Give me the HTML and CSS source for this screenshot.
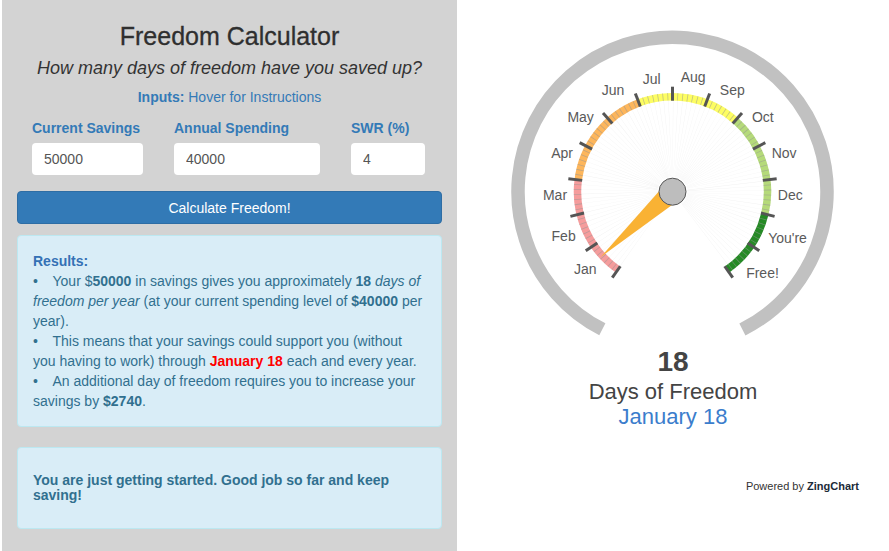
FILE: index.html
```html
<!DOCTYPE html>
<html lang="en">
<head>
<meta charset="utf-8">
<title>Freedom Calculator</title>
<link rel="stylesheet" href="styles.css">
</head>
<body>
<div class="page">
  <section class="panel">
    <h3 class="title">Freedom Calculator</h3>
    <p class="subtitle">How many days of freedom have you saved up?</p>
    <p class="hint"><b>Inputs:</b> Hover for Instructions</p>
    <div class="fields">
      <div class="field">
        <label class="field-label">Current Savings</label>
        <input class="field-input" type="text" value="50000">
      </div>
      <div class="field">
        <label class="field-label">Annual Spending</label>
        <input class="field-input" type="text" value="40000">
      </div>
      <div class="field">
        <label class="field-label">SWR (%)</label>
        <input class="field-input" type="text" value="4">
      </div>
    </div>
    <button class="calc-btn" type="button">Calculate Freedom!</button>
    <div class="alert results">
      <div class="results-title">Results:</div>
      <div><span class="bullet">•</span>Your $<b>50000</b> in savings gives you approximately <b>18</b> <i>days of</i><br><i>freedom per year</i> (at your current spending level of <b>$40000</b> per<br>year).</div>
      <div><span class="bullet">•</span>This means that your savings could support you (without<br>you having to work) through <span class="red">January 18</span> each and every year.</div>
      <div><span class="bullet">•</span>An additional day of freedom requires you to increase your<br>savings by <b>$2740</b>.</div>
    </div>
    <div class="alert note">
      <h5 class="note-text">You are just getting started. Good job so far and keep<br>saving!</h5>
    </div>
  </section>
  <section class="chart">
    <svg class="gauge" width="432" height="347" viewBox="0 0 432 347">
      <g transform="translate(215.5 191.7)">
        <circle r="154.5" fill="none" stroke="#c1c1c1" stroke-width="13.5" stroke-dasharray="825.1 970.8" transform="rotate(-243)"/>
        <path d="M -30.40 43.42 A 53 53 0 1 1 30.40 43.42" fill="none" stroke="#f1f1f1" stroke-width="76" stroke-dasharray="0.3 2.437"/>
        <g fill="none" stroke-width="7.5">
          <circle r="95" stroke="#f59c9c" stroke-dasharray="103.04 596.9" transform="rotate(-235)"/>
          <circle r="95" stroke="#fdb65c" stroke-dasharray="103.04 596.9" transform="rotate(-172.857)"/>
          <circle r="95" stroke="#fdfd62" stroke-dasharray="103.04 596.9" transform="rotate(-110.714)"/>
          <circle r="95" stroke="#b5da7a" stroke-dasharray="103.04 596.9" transform="rotate(-48.571)"/>
          <circle r="95" stroke="#258a25" stroke-dasharray="68.69 596.9" transform="rotate(13.571)"/>
          <path d="M -54.49 77.82 A 95 95 0 1 1 54.49 77.82" stroke="rgba(150,150,150,0.55)" stroke-dasharray="0.8 4.106" stroke-dashoffset="0.4"/>
        </g>
        <g stroke="#555" stroke-width="3">
          <line x1="0" y1="-91" x2="0" y2="-105" transform="rotate(-145)"/>
          <line x1="0" y1="-91" x2="0" y2="-105" transform="rotate(-124.286)"/>
          <line x1="0" y1="-91" x2="0" y2="-105" transform="rotate(-103.571)"/>
          <line x1="0" y1="-91" x2="0" y2="-105" transform="rotate(-82.857)"/>
          <line x1="0" y1="-91" x2="0" y2="-105" transform="rotate(-62.143)"/>
          <line x1="0" y1="-91" x2="0" y2="-105" transform="rotate(-41.429)"/>
          <line x1="0" y1="-91" x2="0" y2="-105" transform="rotate(-20.714)"/>
          <line x1="0" y1="-91" x2="0" y2="-105"/>
          <line x1="0" y1="-91" x2="0" y2="-105" transform="rotate(20.714)"/>
          <line x1="0" y1="-91" x2="0" y2="-105" transform="rotate(41.429)"/>
          <line x1="0" y1="-91" x2="0" y2="-105" transform="rotate(62.143)"/>
          <line x1="0" y1="-91" x2="0" y2="-105" transform="rotate(82.857)"/>
          <line x1="0" y1="-91" x2="0" y2="-105" transform="rotate(103.571)"/>
          <line x1="0" y1="-91" x2="0" y2="-105" transform="rotate(124.286)"/>
          <line x1="0" y1="-91" x2="0" y2="-105" transform="rotate(145)"/>
        </g>
        <g class="gauge-labels" text-anchor="middle">
          <text x="-87.2" y="82.3">Jan</text>
          <text x="-108.9" y="49">Feb</text>
          <text x="-117.5" y="8.3">Mar</text>
          <text x="-110.4" y="-33.4">Apr</text>
          <text x="-91.9" y="-70">May</text>
          <text x="-59.4" y="-96.7">Jun</text>
          <text x="-20.9" y="-107.7">Jul</text>
          <text x="20.6" y="-110">Aug</text>
          <text x="59.8" y="-96.7">Sep</text>
          <text x="90.3" y="-69.4">Oct</text>
          <text x="111.6" y="-33.4">Nov</text>
          <text x="117.8" y="8.3">Dec</text>
          <text x="115" y="51">You're</text>
          <text x="90" y="86.6">Free!</text>
        </g>
        <polygon points="0,-97 10.5,0 -10.5,0" fill="#f9b234" transform="rotate(-132.3)"/>
        <circle r="13.5" fill="#bdbdbd" stroke="#555" stroke-width="1"/>
      </g>
    </svg>
    <div class="days">18</div>
    <div class="days-label">Days of Freedom</div>
    <div class="date">January 18</div>
    <div class="powered">Powered by <b>ZingChart</b></div>
  </section>
</div>
</body>
</html>
```

FILE: styles.css
```css
* {
  box-sizing: border-box;
}

html,
body {
  margin: 0;
  padding: 0;
}

body {
  font-family: "Liberation Sans", Arial, Helvetica, sans-serif;
  font-size: 14px;
  line-height: 20px;
  color: #333;
  background: #fff;
}

.page {
  display: flex;
  height: 551px;
}

.panel {
  flex: none;
  width: 455px;
  margin-left: 2px;
  padding: 22px 15px 0;
  background: #d3d3d3;
}

.title {
  margin: 0;
  font-size: 25px;
  line-height: 28px;
  font-weight: normal;
  text-align: center;
  color: #2f2f2f;
  -webkit-text-stroke: 0.3px #2f2f2f;
}

.subtitle {
  margin: 7px 0 0;
  font-size: 18px;
  line-height: 22px;
  font-style: italic;
  text-align: center;
  color: #333;
}

.hint {
  margin: 8px 0 0;
  text-align: center;
  color: #337ab7;
}

.fields {
  display: grid;
  grid-template-columns: 111px 146px 74px;
  column-gap: 31px;
  padding-left: 15px;
  margin-top: 11px;
}

.field-label {
  display: block;
  margin-bottom: 5px;
  font-weight: bold;
  color: #337ab7;
  white-space: nowrap;
}

.field-input {
  display: block;
  width: 100%;
  height: 32px;
  margin: 0;
  padding: 0 12px;
  border: none;
  border-radius: 4px;
  background: #fff;
  font-family: "Liberation Sans", Arial, Helvetica, sans-serif;
  font-size: 14px;
  color: #555;
  outline: none;
}

.calc-btn {
  display: block;
  width: 100%;
  height: 33px;
  margin: 16px 0 0;
  padding: 0;
  background: #337ab7;
  border: 1px solid #2e6da4;
  border-radius: 4px;
  color: #fff;
  font-family: "Liberation Sans", Arial, Helvetica, sans-serif;
  font-size: 14px;
  line-height: 20px;
}

.alert {
  padding: 15px;
  background: #d9edf7;
  border: 1px solid #bce8f1;
  border-radius: 4px;
  color: #31708f;
}

.results {
  margin-top: 11px;
  white-space: nowrap;
}

.results-title {
  font-weight: bold;
  color: #3471b5;
}

.bullet {
  display: inline-block;
  width: 19.5px;
}

.red {
  color: #f00;
  font-weight: bold;
}

.note {
  margin-top: 20px;
}

.note-text {
  margin: 10px 0;
  font-size: 14px;
  line-height: 15px;
  font-weight: bold;
}

.chart {
  flex: 1;
  display: flex;
  flex-direction: column;
  text-align: center;
}

.gauge {
  display: block;
  flex: none;
}

.gauge-labels {
  font-family: "Liberation Sans", Arial, Helvetica, sans-serif;
  font-size: 14px;
  fill: #5a5a5a;
}

.days {
  font-size: 28px;
  line-height: 30px;
  font-weight: bold;
  color: #444;
}

.days-label {
  margin-top: 3px;
  font-size: 22px;
  line-height: 24px;
  color: #444;
}

.date {
  margin-top: 1px;
  font-size: 22px;
  line-height: 24px;
  color: #3b7dcc;
}

.powered {
  margin-top: 51px;
  padding-right: 30px;
  text-align: right;
  font-size: 11px;
  line-height: 13px;
  color: #333;
}

.powered b {
  color: #1b2a38;
}
```
